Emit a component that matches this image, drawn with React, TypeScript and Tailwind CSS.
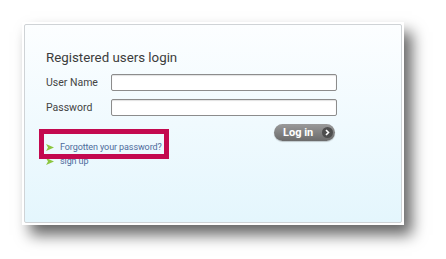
function Arrow() {
  return (
    <svg width="8" height="7" viewBox="0 0 8 7" className="shrink-0">
      <path d="M0 0 L8 3.5 L0 7 L2 3.5 Z" fill="#8cc63f" />
    </svg>
  );
}

function App() {
  return (
    <main
      className="w-[446px] h-[259px] bg-white overflow-hidden pt-[22px] pl-[22px]"
      style={{ fontFamily: "Roboto, 'Liberation Sans', sans-serif" }}
    >
      <div className="relative w-[382px] h-[203px] bg-white p-[2px] shadow-[8px_10px_14px_rgba(0,0,0,0.6)]">
        <div className="h-full border border-[#cfd3d6] rounded-[2px] bg-gradient-to-b from-[#fcfeff] to-[#e4f6fd] pl-[21px] pt-[25px] pr-[64px]">
          <h1 className="text-[13.3px] leading-[16px] text-[#3c3c3c]">Registered users login</h1>

          <div className="mt-[8px] grid grid-cols-[65px_1fr] gap-y-[8px] items-center">
            <label className="text-[10.5px] text-[#444]">User Name</label>
            <input className="h-[17px] border border-[#8c8c8c] rounded-[2px] bg-white shadow-[inset_0_1px_1px_rgba(0,0,0,0.12)]" />
            <label className="text-[10.5px] text-[#444]">Password</label>
            <input className="h-[17px] border border-[#8c8c8c] rounded-[2px] bg-white shadow-[inset_0_1px_1px_rgba(0,0,0,0.12)]" />
          </div>

          <div className="mt-[8px] flex justify-end pr-[2px]">
            <button className="flex items-center gap-[9px] h-[17px] w-[61px] rounded-full bg-gradient-to-b from-[#9a9a9a] to-[#6b6b6b] pl-[9px] shadow-[0_1px_1px_rgba(0,0,0,0.2)]">
              <span className="text-[11px] font-bold leading-none text-white">Log in</span>
              <span className="flex items-center justify-center w-[11px] h-[11px] rounded-full bg-[#4e4e4e]">
                <svg width="5" height="7" viewBox="0 0 5 7">
                  <path d="M1 1 L3.5 3.5 L1 6" stroke="white" strokeWidth="1.6" fill="none" />
                </svg>
              </span>
            </button>
          </div>

          <div className="mt-[1px] flex flex-col gap-[4px] text-[9px] leading-[10px] tracking-[-0.1px] text-[#4d6b9c]">
            <div className="flex items-center gap-[6px]">
              <Arrow />
              <span>Forgotten your password?</span>
            </div>
            <div className="flex items-center gap-[6px]">
              <Arrow />
              <span>sign up</span>
            </div>
          </div>
        </div>

        <div className="absolute left-[17px] top-[107px] w-[130px] h-[30px] border-[5px] border-[#c3094f]" />
      </div>
    </main>
  );
}

export default App;
